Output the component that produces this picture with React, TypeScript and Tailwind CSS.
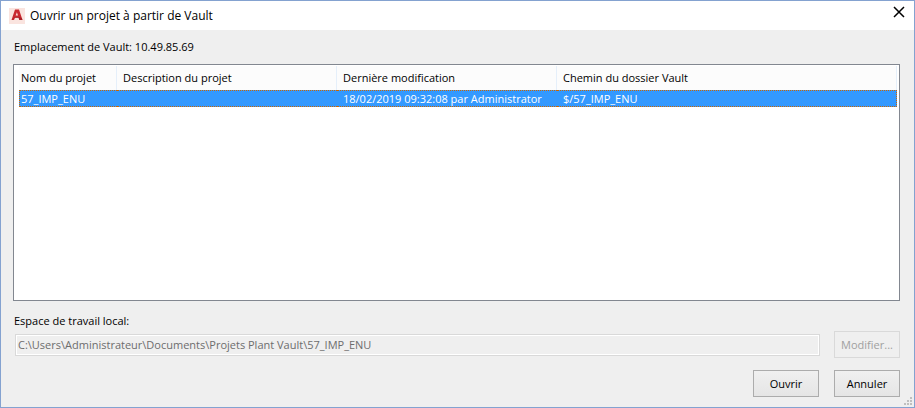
import { useState } from "react";

type Project = {
    name: string;
    description: string;
    modified: string;
    path: string;
};

const projects: Project[] = [
    {
        name: "57_IMP_ENU",
        description: "",
        modified: "18/02/2019 09:32:08 par Administrator",
        path: "$/57_IMP_ENU",
    },
];

const AppIcon = () => (
    <svg width="16" height="16" viewBox="0 0 16 16" aria-hidden="true">
        <rect width="16" height="16" fill="#fae4df" />
        <path d="M6 1.500h4L13.500 12h-3.200L9.600 9.800H6L5 12H2.500z" fill="#c9282f" />
        <path d="M7.900 4.200L9 7.600H6.700z" fill="#fae4df" />
        <path d="M2.500 12L6 9.800h3.600l.7 2.200h3.200l-.6-2-2.600-1H6z" fill="#8f1a22" opacity="0.55" />
    </svg>
);

const TitleBar = () => (
    <header className="flex h-[29px] items-center bg-white pr-[9px] pl-2">
        <AppIcon />
        <h1 className="ml-[5px] flex-1 text-[12px]">Ouvrir un projet à partir de Vault</h1>
        <button type="button" aria-label="Fermer" className="mb-2">
            <svg width="12" height="12" viewBox="0 0 12 12" aria-hidden="true">
                <path d="M1 1l10 10M11 1L1 11" stroke="#000" strokeWidth="1.5" />
            </svg>
        </button>
    </header>
);

type ProjectTableProps = {
    rows: Project[];
    selected: number;
    onSelect: (index: number) => void;
};

const headerClass = "border-r border-[#e5effa] pl-[6px] font-normal";
const cellClass = "border-y border-dotted pl-[6px]";

const ProjectTable = ({ rows, selected, onSelect }: ProjectTableProps) => (
    <table className="w-full table-fixed border-separate border-spacing-0 text-left text-[11px]">
        <colgroup>
            <col className="w-[98px]" />
            <col className="w-[220px]" />
            <col className="w-[220px]" />
            <col />
        </colgroup>
        <thead>
            <tr className="h-6 bg-[#fcfcfc]">
                <th className="border-r border-[#e5effa] pl-[2px] font-normal">Nom du projet</th>
                <th className={headerClass}>Description du projet</th>
                <th className={headerClass}>Dernière modification</th>
                <th className={headerClass}>Chemin du dossier Vault</th>
            </tr>
        </thead>
        <tbody>
            {rows.map((row, index) => (
                <tr
                    key={row.path}
                    onClick={() => onSelect(index)}
                    className={
                        index === selected
                            ? "h-[17px] bg-[#3399ff] leading-[15px] text-white *:border-[#cc6600]"
                            : "h-[17px] leading-[15px] *:border-transparent"
                    }
                >
                    <td className="border-y border-l border-dotted pl-px">{row.name}</td>
                    <td className={cellClass}>{row.description}</td>
                    <td className={cellClass}>{row.modified}</td>
                    <td className="border-y border-r border-dotted pl-[6px]">{row.path}</td>
                </tr>
            ))}
        </tbody>
    </table>
);

const ResizeGrip = () => (
    <svg className="absolute right-[2px] bottom-[2px]" width="8" height="8" viewBox="0 0 8 8" aria-hidden="true">
        <path d="M6 0h2v2H6zM3 3h2v2H3zM6 3h2v2H6zM0 6h2v2H0zM3 6h2v2H3zM6 6h2v2H6z" fill="#bfbfbf" />
    </svg>
);

const buttonClass =
    "h-[27px] w-[66px] border border-[#acacac] bg-linear-to-b from-[#f0f0f0] to-[#e5e5e5] pt-px text-center";

const App = () => {
    const [selected, setSelected] = useState(0);

    return (
        <div className="relative flex min-h-screen flex-col border border-[#84a2d0] bg-[#efefef] font-['Open_Sans','Noto_Sans',sans-serif] text-[11px] text-black">
            <TitleBar />
            <main className="flex flex-1 flex-col pt-[9px] pr-[14px] pb-[10px] pl-3">
                <p className="pl-px leading-4">Emplacement de Vault: 10.49.85.69</p>
                <section className="mt-[9px] flex-1 border border-[#828790] bg-white pt-px pr-[2px] pl-[5px]">
                    <ProjectTable rows={projects} selected={selected} onSelect={setSelected} />
                </section>
                <label htmlFor="workspace" className="mt-3 pl-px leading-4">
                    Espace de travail local:
                </label>
                <div className="mt-[2px] flex items-center gap-[14px] pl-[2px]">
                    <input
                        id="workspace"
                        type="text"
                        disabled
                        value="C:\Users\Administrateur\Documents\Projets Plant Vault\57_IMP_ENU"
                        className="h-[22px] min-w-0 flex-1 border border-[#d9d9d9] bg-[#efefef] px-[2px] text-[#6d6d6d] inset-ring inset-ring-white"
                    />
                    <button
                        type="button"
                        disabled
                        className="h-[27px] w-[66px] border border-[#d9d9d9] bg-[#efefef] pt-px text-center text-[#a0a0a0]"
                    >
                        Modifier...
                    </button>
                </div>
                <div className="mt-3 flex justify-end gap-[15px]">
                    <button type="button" className={buttonClass}>
                        Ouvrir
                    </button>
                    <button type="button" className={buttonClass}>
                        Annuler
                    </button>
                </div>
            </main>
            <ResizeGrip />
        </div>
    );
};

export default App;
